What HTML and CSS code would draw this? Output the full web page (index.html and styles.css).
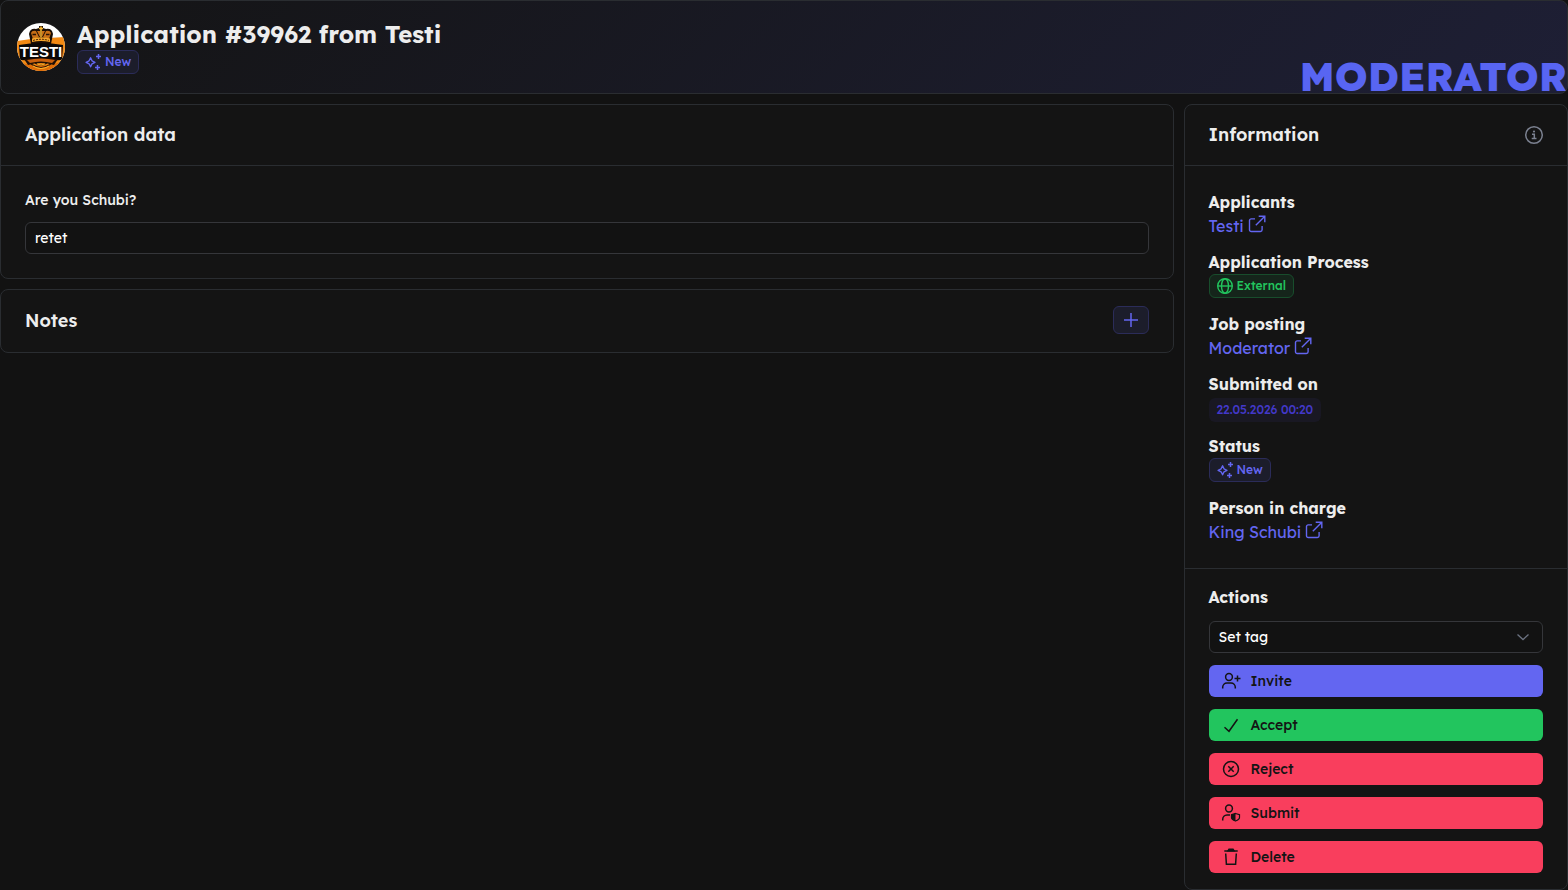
FILE: index.html
```html
<!DOCTYPE html>
<html lang="en">
<head>
    <meta charset="UTF-8">
    <meta name="viewport" content="width=device-width, initial-scale=1.0">
    <title>Application #39962</title>
    <link rel="stylesheet" href="styles.css">
</head>
<body>
    <!-- shared icons -->
    <svg class="sprite" width="0" height="0" aria-hidden="true">
        <symbol id="icon-sparkles" viewBox="0 0 18 18">
            <path d="M5.600 4.800 7 7.800 10 9.300 7 10.800 5.600 13.800 4.100 10.800 1.100 9.300 4.100 7.800Z" fill="none" stroke="currentColor" stroke-width="1.400" stroke-linejoin="round"/>
            <path d="M13.500 1v5M11 3.500h5M12.500 12v5M10 14.500h5" fill="none" stroke="currentColor" stroke-width="1.500"/>
        </symbol>
        <symbol id="icon-external" viewBox="0 0 18 18">
            <path d="M7 3.900H3.200A1.700 1.700 0 0 0 1.500 5.600v9.200a1.700 1.700 0 0 0 1.700 1.700h9.200a1.700 1.700 0 0 0 1.700-1.700V11M10.700 1.200h6.100v6.100M16.600 1.400 7.800 10.200" fill="none" stroke="currentColor" stroke-width="1.400"/>
        </symbol>
    </svg>

    <header class="card page-header">
        <svg class="avatar" viewBox="0 0 48 48" role="img" aria-label="Testi">
            <defs>
                <clipPath id="avatarClip"><circle cx="24" cy="24" r="24"/></clipPath>
            </defs>
            <g clip-path="url(#avatarClip)">
                <rect width="48" height="48" fill="#fff"/>
                <path d="M0 18 14 16 48 14V48H0Z" fill="#f28a14"/>
                <path d="M0 39Q24 46 48 38V48H0Z" fill="#df6d08"/>
                <!-- crown -->
                <path d="M14 21 12 11Q13 5 19 6L22 5V3H26V5L29 6Q35 5 36 11L34 21Z" fill="#1b0e05"/>
                <path d="M16 16 14 10Q15 7 19 8L22 14ZM32 16 34 10Q33 7 29 8L26 14ZM20 8H23V14ZM28 8H25V14Z" fill="#c96f16"/>
                <path d="M24 3.500V14M22 5.500H26" stroke="#ffbd35" stroke-width="1.500"/>
                <path d="M15 15.500Q24 13 33 15.500V19Q24 17 15 19Z" fill="#f5a52a"/>
                <path d="M16 17.500Q24 15 32 17.500" fill="none" stroke="#4a2308" stroke-width="1" stroke-dasharray="2 1"/>
                <path d="M15.500 11.500H19M29 11.500H32.500" stroke="#281306" stroke-width="1.500"/>
                <!-- banner -->
                <path d="M2 22Q24 18 46 22L45 37Q24 38 3 37Z" fill="#0a0807"/>
                <path d="M7 36Q24 34 41 36L37 42Q24 38 11 42Z" fill="#211006"/>
                <path d="M10 37Q24 34 38 37L35 40Q24 37 13 40Z" fill="#c9600f"/>
                <path d="M14 41Q24 48 34 41M18 40Q24 44 30 40" fill="none" stroke="#2a1506" stroke-width="1.200"/>
                <path d="M16 43Q24 48 32 43M20 41Q24 43 28 41" fill="none" stroke="#ffb52d" stroke-width="1"/>
                <text class="avatar-text" x="24" y="34" text-anchor="middle">TESTI</text>
            </g>
        </svg>
        <div class="page-heading">
            <h1>Application #39962 from Testi</h1>
            <span class="badge badge-primary"><svg class="icon-sm"><use href="#icon-sparkles"/></svg>New</span>
        </div>
        <div class="job-name">MODERATOR</div>
    </header>

    <div class="layout">
        <main class="content">
            <section class="card">
                <div class="card-header">
                    <h2>Application data</h2>
                </div>
                <div class="card-body">
                    <label class="field-label" for="answer">Are you Schubi?</label>
                    <input class="field" type="text" id="answer" value="retet" readonly>
                </div>
            </section>

            <section class="card">
                <div class="card-header notes-header">
                    <h2>Notes</h2>
                    <button class="add-button" type="button" aria-label="Add note">
                        <svg width="16" height="16" viewBox="0 0 16 16"><path d="M8 1v14M1 8h14" stroke="currentColor" stroke-width="1.500"/></svg>
                    </button>
                </div>
            </section>
        </main>

        <aside class="card sidebar">
            <div class="card-header sidebar-header">
                <h2>Information</h2>
                <svg class="info-icon" viewBox="0 0 20 20" fill="none" stroke="currentColor">
                    <circle cx="10" cy="10" r="8.300" stroke-width="1.500"/>
                    <path d="M8 9.200h2.300v4.300M7.700 13.500h4.800" stroke-width="1.500"/>
                    <circle cx="10" cy="6.500" r="1.100" fill="currentColor" stroke="none"/>
                </svg>
            </div>
            <dl class="info-list">
                <div>
                    <dt>Applicants</dt>
                    <dd><a href="#">Testi<svg class="link-icon"><use href="#icon-external"/></svg></a></dd>
                </div>
                <div>
                    <dt>Application Process</dt>
                    <dd class="badge-row"><span class="badge badge-success"><svg class="icon-sm" viewBox="0 0 18 18" fill="none" stroke="currentColor" stroke-width="1.400"><circle cx="8" cy="9" r="7.300"/><ellipse cx="8" cy="9" rx="3.500" ry="7.300"/><path d="M.7 9h14.600"/></svg>External</span></dd>
                </div>
                <div>
                    <dt>Job posting</dt>
                    <dd><a href="#">Moderator<svg class="link-icon"><use href="#icon-external"/></svg></a></dd>
                </div>
                <div>
                    <dt>Submitted on</dt>
                    <dd class="badge-row badge-row-end"><span class="badge badge-date">22.05.2026 00:20</span></dd>
                </div>
                <div>
                    <dt>Status</dt>
                    <dd class="badge-row"><span class="badge badge-primary"><svg class="icon-sm"><use href="#icon-sparkles"/></svg>New</span></dd>
                </div>
                <div>
                    <dt>Person in charge</dt>
                    <dd><a href="#">King Schubi<svg class="link-icon"><use href="#icon-external"/></svg></a></dd>
                </div>
            </dl>
            <div class="actions">
                <label for="tag">Actions</label>
                <div class="select-wrap">
                    <select class="field" id="tag">
                        <option>Set tag</option>
                    </select>
                    <svg class="chevron" viewBox="0 0 14 14"><path d="m1.500 4.500 5.500 5 5.500-5" fill="none" stroke="currentColor" stroke-width="1.300"/></svg>
                </div>
                <button class="btn btn-primary" type="button">
                    <svg viewBox="0 0 20 20" fill="none" stroke="currentColor" stroke-width="1.500"><circle cx="8" cy="6" r="3.400"/><path d="M1.700 17.500v-1.200c0-2.500 1.900-4.300 4.300-4.300h4c2.400 0 4.300 1.800 4.300 4.300v1.200M16.500 4.500v6M13.500 7.500h6"/></svg>
                    Invite
                </button>
                <button class="btn btn-success" type="button">
                    <svg viewBox="0 0 20 20" fill="none" stroke="currentColor" stroke-width="1.500"><path d="m3.500 12.300 4.500 4L16.500 4.200"/></svg>
                    Accept
                </button>
                <button class="btn btn-danger" type="button">
                    <svg viewBox="0 0 20 20" fill="none" stroke="currentColor" stroke-width="1.500"><circle cx="10" cy="10" r="7.500"/><path d="m7.300 7.300 5.400 5.400M12.700 7.300l-5.400 5.400"/></svg>
                    Reject
                </button>
                <button class="btn btn-danger" type="button">
                    <svg viewBox="0 0 20 20" fill="none" stroke="currentColor" stroke-width="1.500"><circle cx="8" cy="5.500" r="3.400"/><path d="M1.700 17.500v-1c0-2.600 1.900-4.500 4.300-4.500h3"/><path d="m14.500 10.500 4 1.200v2.800c0 1.700-1.500 2.700-4 3.500-2.500-.8-4-1.800-4-3.500v-2.800Z" stroke-width="1.200"/><path d="m14.500 10.500-4 1.200v2.800c0 1.700 1.500 2.700 4 3.500Z" fill="currentColor" stroke="none"/></svg>
                    Submit
                </button>
                <button class="btn btn-danger" type="button">
                    <svg viewBox="0 0 20 20" fill="none" stroke="currentColor" stroke-width="1.500"><path d="M3.300 4h13.400M4.700 6.500l.7 10.800h9.200l.7-10.800"/><path d="M7 3.800 8 2.300h4l1 1.500Z" fill="currentColor"/></svg>
                    Delete
                </button>
            </div>
        </aside>
    </div>
</body>
</html>
```
FILE: styles.css
```css
* {
    box-sizing: border-box;
}
body {
    margin: 0;
    background-color: #121212;
    color: #ededed;
    font-family: Lexend, Inter, "Liberation Sans", sans-serif;
    font-size: 16px;
    line-height: 24px;
}
h1, h2, dl, dd {
    margin: 0;
}
button, input, select {
    font-family: inherit;
    font-size: 14px;
}
.sprite {
    position: absolute;
}
.card {
    background-color: #141414;
    border: 1px solid #2a2d31;
    border-radius: 8px;
}

/* Header */
.page-header {
    display: flex;
    align-items: center;
    gap: 12px;
    margin-bottom: 10px;
    padding: 19px 0 19px 16px;
    position: relative;
    background-image: linear-gradient(135deg, #141414, #1e1f35);
}
.avatar {
    width: 48px;
    height: 48px;
}
.avatar-text {
    font-family: "Liberation Sans", sans-serif;
    font-size: 15px;
    font-weight: bold;
    fill: #fff;
}
.page-heading {
    display: flex;
    flex-direction: column;
    align-items: flex-start;
    gap: 2px;
}
h1 {
    font-size: 24px;
    font-weight: 700;
    line-height: 28px;
}
.job-name {
    position: absolute;
    right: 0;
    bottom: 0;
    color: #5865f2;
    font-size: 40px;
    font-weight: 800;
    line-height: 34px;
}

/* Badges */
.badge {
    display: inline-flex;
    align-items: center;
    gap: 2px;
    height: 24px;
    padding: 0 7px;
    border: 1px solid transparent;
    border-radius: 6px;
    font-size: 12px;
    font-weight: 500;
}
.icon-sm {
    width: 18px;
    height: 18px;
}
.badge-primary {
    background-color: #1c1d2b;
    border-color: #2b2c59;
    color: #6366f1;
}
.badge-success {
    background-color: #15251b;
    border-color: #184d2c;
    color: #22c55e;
}
.badge-date {
    background-color: #191823;
    color: #4338ca;
}

/* Layout */
.layout {
    display: grid;
    grid-template-columns: repeat(4, 1fr);
    gap: 10px;
}
.content {
    grid-column: span 3;
    display: flex;
    flex-direction: column;
    gap: 10px;
}
.card-header {
    display: flex;
    align-items: center;
    justify-content: space-between;
    padding: 17px 24px;
    border-bottom: 1px solid #2a2d31;
}
.notes-header {
    padding: 17px 24px 18px;
    border-bottom: none;
}
h2 {
    font-size: 18px;
    font-weight: 600;
    line-height: 26px;
}
.card-body {
    padding: 24px;
}
.field-label {
    display: block;
    margin-bottom: 12px;
    font-size: 14px;
    font-weight: 500;
    line-height: 20px;
}
.field {
    display: block;
    width: 100%;
    height: 32px;
    padding: 0 9px;
    background-color: #121212;
    border: 1px solid #35363a;
    border-radius: 6px;
    color: #fff;
    appearance: none;
}
.add-button {
    display: flex;
    align-items: center;
    justify-content: center;
    width: 36px;
    height: 28px;
    margin: -1px 0 0;
    padding: 0;
    background-color: #1c1d2b;
    border: 1px solid #2b2c59;
    border-radius: 6px;
    color: #6366f1;
    cursor: pointer;
}

/* Sidebar */
.sidebar-header {
    padding-right: 23px;
}
.info-icon {
    width: 20px;
    height: 20px;
    color: #7b8190;
}
.info-list {
    display: flex;
    flex-direction: column;
    gap: 12px;
    padding: 24px;
    border-bottom: 1px solid #2a2d31;
}
dt {
    font-weight: 700;
}
dd {
    display: flex;
}
dd a {
    display: flex;
    gap: 4px;
    color: #6366f1;
    text-decoration: none;
}
.link-icon {
    width: 18px;
    height: 18px;
    margin-top: 1px;
}
.badge-row {
    height: 26px;
    align-items: flex-start;
}
.badge-row-end {
    align-items: flex-end;
}
.actions {
    display: flex;
    flex-direction: column;
    gap: 12px;
    padding: 16px 24px;
}
.actions label {
    font-weight: 700;
}
.select-wrap {
    position: relative;
}
.chevron {
    position: absolute;
    top: 9px;
    right: 13px;
    width: 14px;
    height: 14px;
    color: #6b7280;
    pointer-events: none;
}
.btn {
    display: flex;
    align-items: center;
    gap: 10px;
    height: 32px;
    padding: 0 12px;
    border: none;
    border-radius: 6px;
    color: #141414;
    font-weight: 500;
    cursor: pointer;
}
.btn svg {
    width: 20px;
    height: 20px;
}
.btn-primary {
    background-color: #6366f1;
}
.btn-success {
    background-color: #22c55e;
}
.btn-danger {
    background-color: #f93e5d;
}
```
